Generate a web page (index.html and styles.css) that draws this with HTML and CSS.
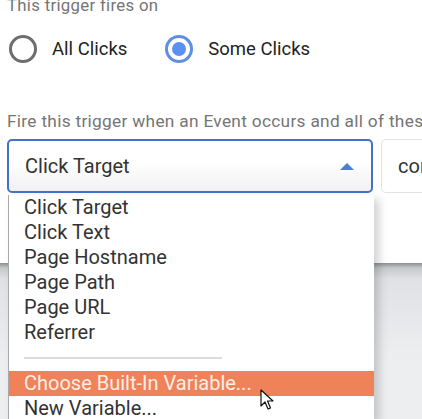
FILE: index.html
```html
<!DOCTYPE html>
<html lang="en">
<head>
    <meta charset="UTF-8">
    <meta name="viewport" content="width=device-width, initial-scale=1.0">
    <title>Trigger Configuration</title>
    <link rel="stylesheet" href="styles.css">
</head>
<body>
    <div class="card">
        <p class="label label-top">This trigger fires on</p>
        <div class="radios">
            <label class="radio"><span class="dot"></span>All Clicks</label>
            <label class="radio checked"><span class="dot"></span>Some Clicks</label>
        </div>
        <p class="label label-fire">Fire this trigger when an Event occurs and all of these conditions are true</p>
        <div class="condition">
            <div class="select">
                <span>Click Target</span>
                <span class="caret"></span>
            </div>
            <div class="field">contains</div>
        </div>
    </div>
    <div class="backdrop"></div>

    <!-- open variable menu -->
    <ul class="menu">
        <li>Click Target</li>
        <li>Click Text</li>
        <li>Page Hostname</li>
        <li>Page Path</li>
        <li>Page URL</li>
        <li>Referrer</li>
        <li class="sep"><span></span></li>
        <li class="active">Choose Built-In Variable...</li>
        <li>New Variable...</li>
    </ul>

    <svg class="pointer" width="14" height="22" viewBox="0 0 14 22">
        <path d="M1 1 L1 17 L5 13 L8 20 L10.5 19 L7.5 12 L13 12 Z" fill="#fff" stroke="#111" stroke-width="1.2" stroke-linejoin="round"/>
    </svg>
</body>
</html>
```

FILE: styles.css
```css
body {
    margin: 0;
    height: 419px;
    overflow: hidden;
    position: relative;
    font-family: Roboto, "Liberation Sans", sans-serif;
    background-color: #eceef0;
}
.card {
    height: 263px;
    box-sizing: border-box;
    padding-left: 7px;
    background: #fff;
    overflow: hidden;
}
.label {
    margin: 0;
    color: #757575;
    white-space: nowrap;
}
.label-top {
    margin-top: -3px;
    height: 17px;
    line-height: 17px;
    font-size: 16.8px;
    letter-spacing: 0.3px;
}
.radios {
    display: flex;
    gap: 38px;
    margin-top: 21px;
    margin-left: 2px;
    height: 28px;
}
.radio {
    display: flex;
    align-items: center;
    gap: 15px;
    font-size: 18.5px;
    color: #222;
}
.dot {
    width: 28px;
    height: 28px;
    box-sizing: border-box;
    border: 3px solid #6e6e6e;
    border-radius: 50%;
    display: flex;
    align-items: center;
    justify-content: center;
}
.checked .dot {
    border-color: #5f8fe2;
}
.checked .dot::after {
    content: "";
    width: 14px;
    height: 14px;
    border-radius: 50%;
    background: #5b8ff0;
}
.label-fire {
    margin-top: 48px;
    line-height: 20px;
    font-size: 17.3px;
    letter-spacing: 0.3px;
}
.condition {
    display: flex;
    gap: 8px;
    margin-top: 8px;
    white-space: nowrap;
}
.select {
    width: 366px;
    height: 54px;
    flex-shrink: 0;
    box-sizing: border-box;
    border: 2px solid #4271c8;
    border-radius: 5px;
    padding: 0 17px 0 16px;
    display: flex;
    align-items: center;
    justify-content: space-between;
    font-size: 20px;
    color: #333;
    background: linear-gradient(#fff 40%, #f1f1f1);
}
.caret {
    width: 0;
    height: 0;
    border-left: 7.5px solid transparent;
    border-right: 7.5px solid transparent;
    border-bottom: 7px solid #4a7fd4;
}
.field {
    width: 120px;
    height: 54px;
    flex-shrink: 0;
    box-sizing: border-box;
    border: 1px solid #e2e2e2;
    border-radius: 5px;
    padding-left: 16px;
    display: flex;
    align-items: center;
    font-size: 20px;
    color: #333;
}
.backdrop {
    height: 156px;
    background: linear-gradient(#8f8f8f 0, #c6c8ca 5px, #dfe1e4 16px, #eceef0 60%);
}
.menu {
    position: absolute;
    left: 8px;
    top: 195px;
    width: 365px;
    margin: 0;
    padding: 0;
    list-style: none;
    background: #fff;
    border-left: 1px solid #a9a9a9;
    box-shadow: 5px 4px 9px rgba(0, 0, 0, 0.18);
}
.menu li {
    height: 25px;
    line-height: 25px;
    padding-left: 15px;
    font-size: 20px;
    color: #333;
}
.menu .sep {
    height: 26px;
    display: flex;
    align-items: center;
}
.menu .sep span {
    width: 198px;
    height: 2px;
    background: #dcdcdc;
}
.menu .active {
    background-color: #f0825a;
    color: #fdeee6;
}
.pointer {
    position: absolute;
    left: 260px;
    top: 389px;
}
```
